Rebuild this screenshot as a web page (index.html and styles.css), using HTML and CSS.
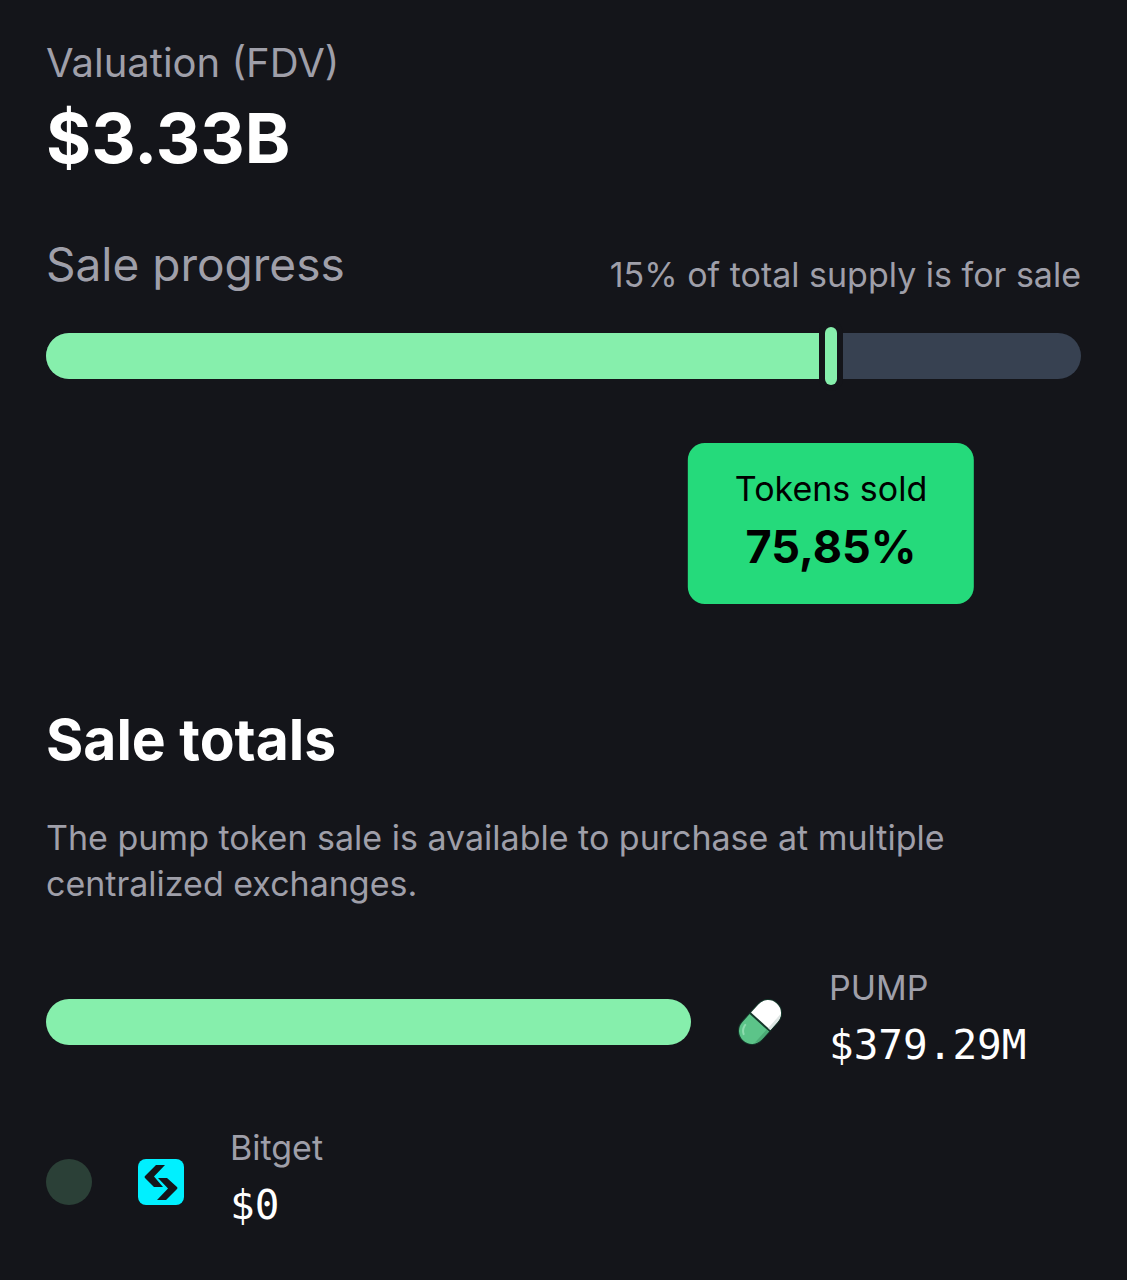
FILE: index.html
```
<!DOCTYPE html>
<html lang="en">
  <head>
    <meta charset="utf-8">
    <meta name="viewport" content="width=device-width, initial-scale=1">
    <title>Token sale</title>
    <link rel="stylesheet" href="styles.css">
  </head>
  <body>
    <main>
      <section class="valuation">
        <p class="valuation-label">Valuation (FDV)</p>
        <p class="valuation-value">$3.33B</p>
      </section>

      <section class="progress">
        <div class="progress-header">
          <h2>Sale progress</h2>
          <p>15% of total supply is for sale</p>
        </div>
        <div class="progress-bar">
          <div class="fill" style="width: 75.85%"></div>
          <div class="marker" style="left: 75.85%"></div>
          <div class="tooltip" style="left: 75.85%">
            <span>Tokens sold</span>
            <strong>75,85%</strong>
          </div>
        </div>
      </section>

      <section class="totals">
        <h1>Sale totals</h1>
        <p class="description">The pump token sale is available to purchase at multiple centralized exchanges.</p>
        <ul>
          <li>
            <div class="bar bar-full"></div>
            <svg class="icon" viewBox="0 0 46 46" aria-hidden="true">
              <g transform="rotate(42 23 23)">
                <rect x="9" y="-3" width="28" height="52" rx="14" fill="#16392c"/>
                <path d="M10 22V11a13 13 0 0 1 26 0v11z" fill="#fff"/>
                <path d="M33 22V4q3 3 3 7v11z" fill="#dfe6e4"/>
                <path d="M10 24v11a13 13 0 0 0 26 0V24z" fill="#5cc489"/>
                <path d="M33 24v18q3-3 3-7V24z" fill="#4cab76"/>
                <path d="M14 35v1q1 5 5 7" fill="none" stroke="#8ddcae" stroke-width="2" stroke-linecap="round"/>
              </g>
            </svg>
            <div class="amount">
              <span>PUMP</span>
              <strong>$379.29M</strong>
            </div>
          </li>
          <li>
            <div class="bar bar-empty"></div>
            <svg class="icon" viewBox="0 0 46 46" aria-hidden="true">
              <rect width="46" height="46" rx="8" fill="#00f0ff"/>
              <path d="M18 6h9L16 17.500l9 10.500h-9L7 19q-1-1 0-2z" fill="#14151a"/>
              <path d="M28 41h-9l11-11.500L20 19h9l10 9q1 1 0 2z" fill="#14151a"/>
            </svg>
            <div class="amount">
              <span>Bitget</span>
              <strong>$0</strong>
            </div>
          </li>
        </ul>
      </section>
    </main>
  </body>
</html>
```
FILE: styles.css
```
body {
    margin: 0;
    background: #14151a;
    color: #9f9fa9;
    font-family: Inter, sans-serif;
    font-size: 34px;
    line-height: 46px;
}

main {
    padding: 34px 46px;
}

h1, h2, p, ul {
    margin: 0;
    padding: 0;
}

.valuation-label {
    font-size: 40px;
    line-height: 58px;
}

.valuation-value {
    color: #fff;
    font-size: 69px;
    font-weight: 700;
    line-height: 92px;
}

.progress {
    margin-top: 46px;
}

.progress-header {
    display: flex;
    justify-content: space-between;
    align-items: flex-end;
}

h2 {
    font-size: 46px;
    font-weight: 400;
    line-height: 68px;
}

.progress-bar {
    position: relative;
    height: 46px;
    margin-top: 35px;
    border-radius: 23px;
    background: #374151;
}

.fill {
    height: 100%;
    border-radius: 23px 0 0 23px;
    background: #86efac;
}

.marker {
    position: absolute;
    top: -6px;
    width: 12px;
    height: 58px;
    border-radius: 6px;
    background: #86efac;
    box-shadow: 0 0 0 6px #14151a;
    transform: translateX(-50%);
}

.tooltip {
    position: absolute;
    top: 110px;
    padding: 23px 47px;
    border-radius: 17px;
    background: #25da7b;
    color: #000;
    text-align: center;
    white-space: nowrap;
    transform: translateX(-50%);
}

.tooltip span {
    display: block;
}

.tooltip strong {
    display: block;
    font-size: 45px;
    line-height: 69px;
}

.totals {
    margin-top: 326px;
}

h1 {
    color: #fff;
    font-size: 57px;
    font-weight: 700;
    line-height: 70px;
}

.description {
    margin-top: 40px;
}

ul {
    margin-top: 58px;
    list-style: none;
}

li {
    display: flex;
    align-items: center;
    gap: 46px;
    margin-bottom: 46px;
}

.bar {
    height: 46px;
    border-radius: 23px;
    background: #86efac;
}

.bar-full {
    flex: 1;
}

.bar-empty {
    width: 46px;
    background: #2b4037;
}

.icon {
    flex: none;
    width: 46px;
    height: 46px;
    overflow: visible;
}

.amount {
    min-width: 252px;
}

.amount span {
    display: block;
}

.amount strong {
    display: block;
    color: #fff;
    font-family: "DejaVu Sans Mono", monospace;
    font-size: 41px;
    font-weight: 400;
    line-height: 68px;
}
```
